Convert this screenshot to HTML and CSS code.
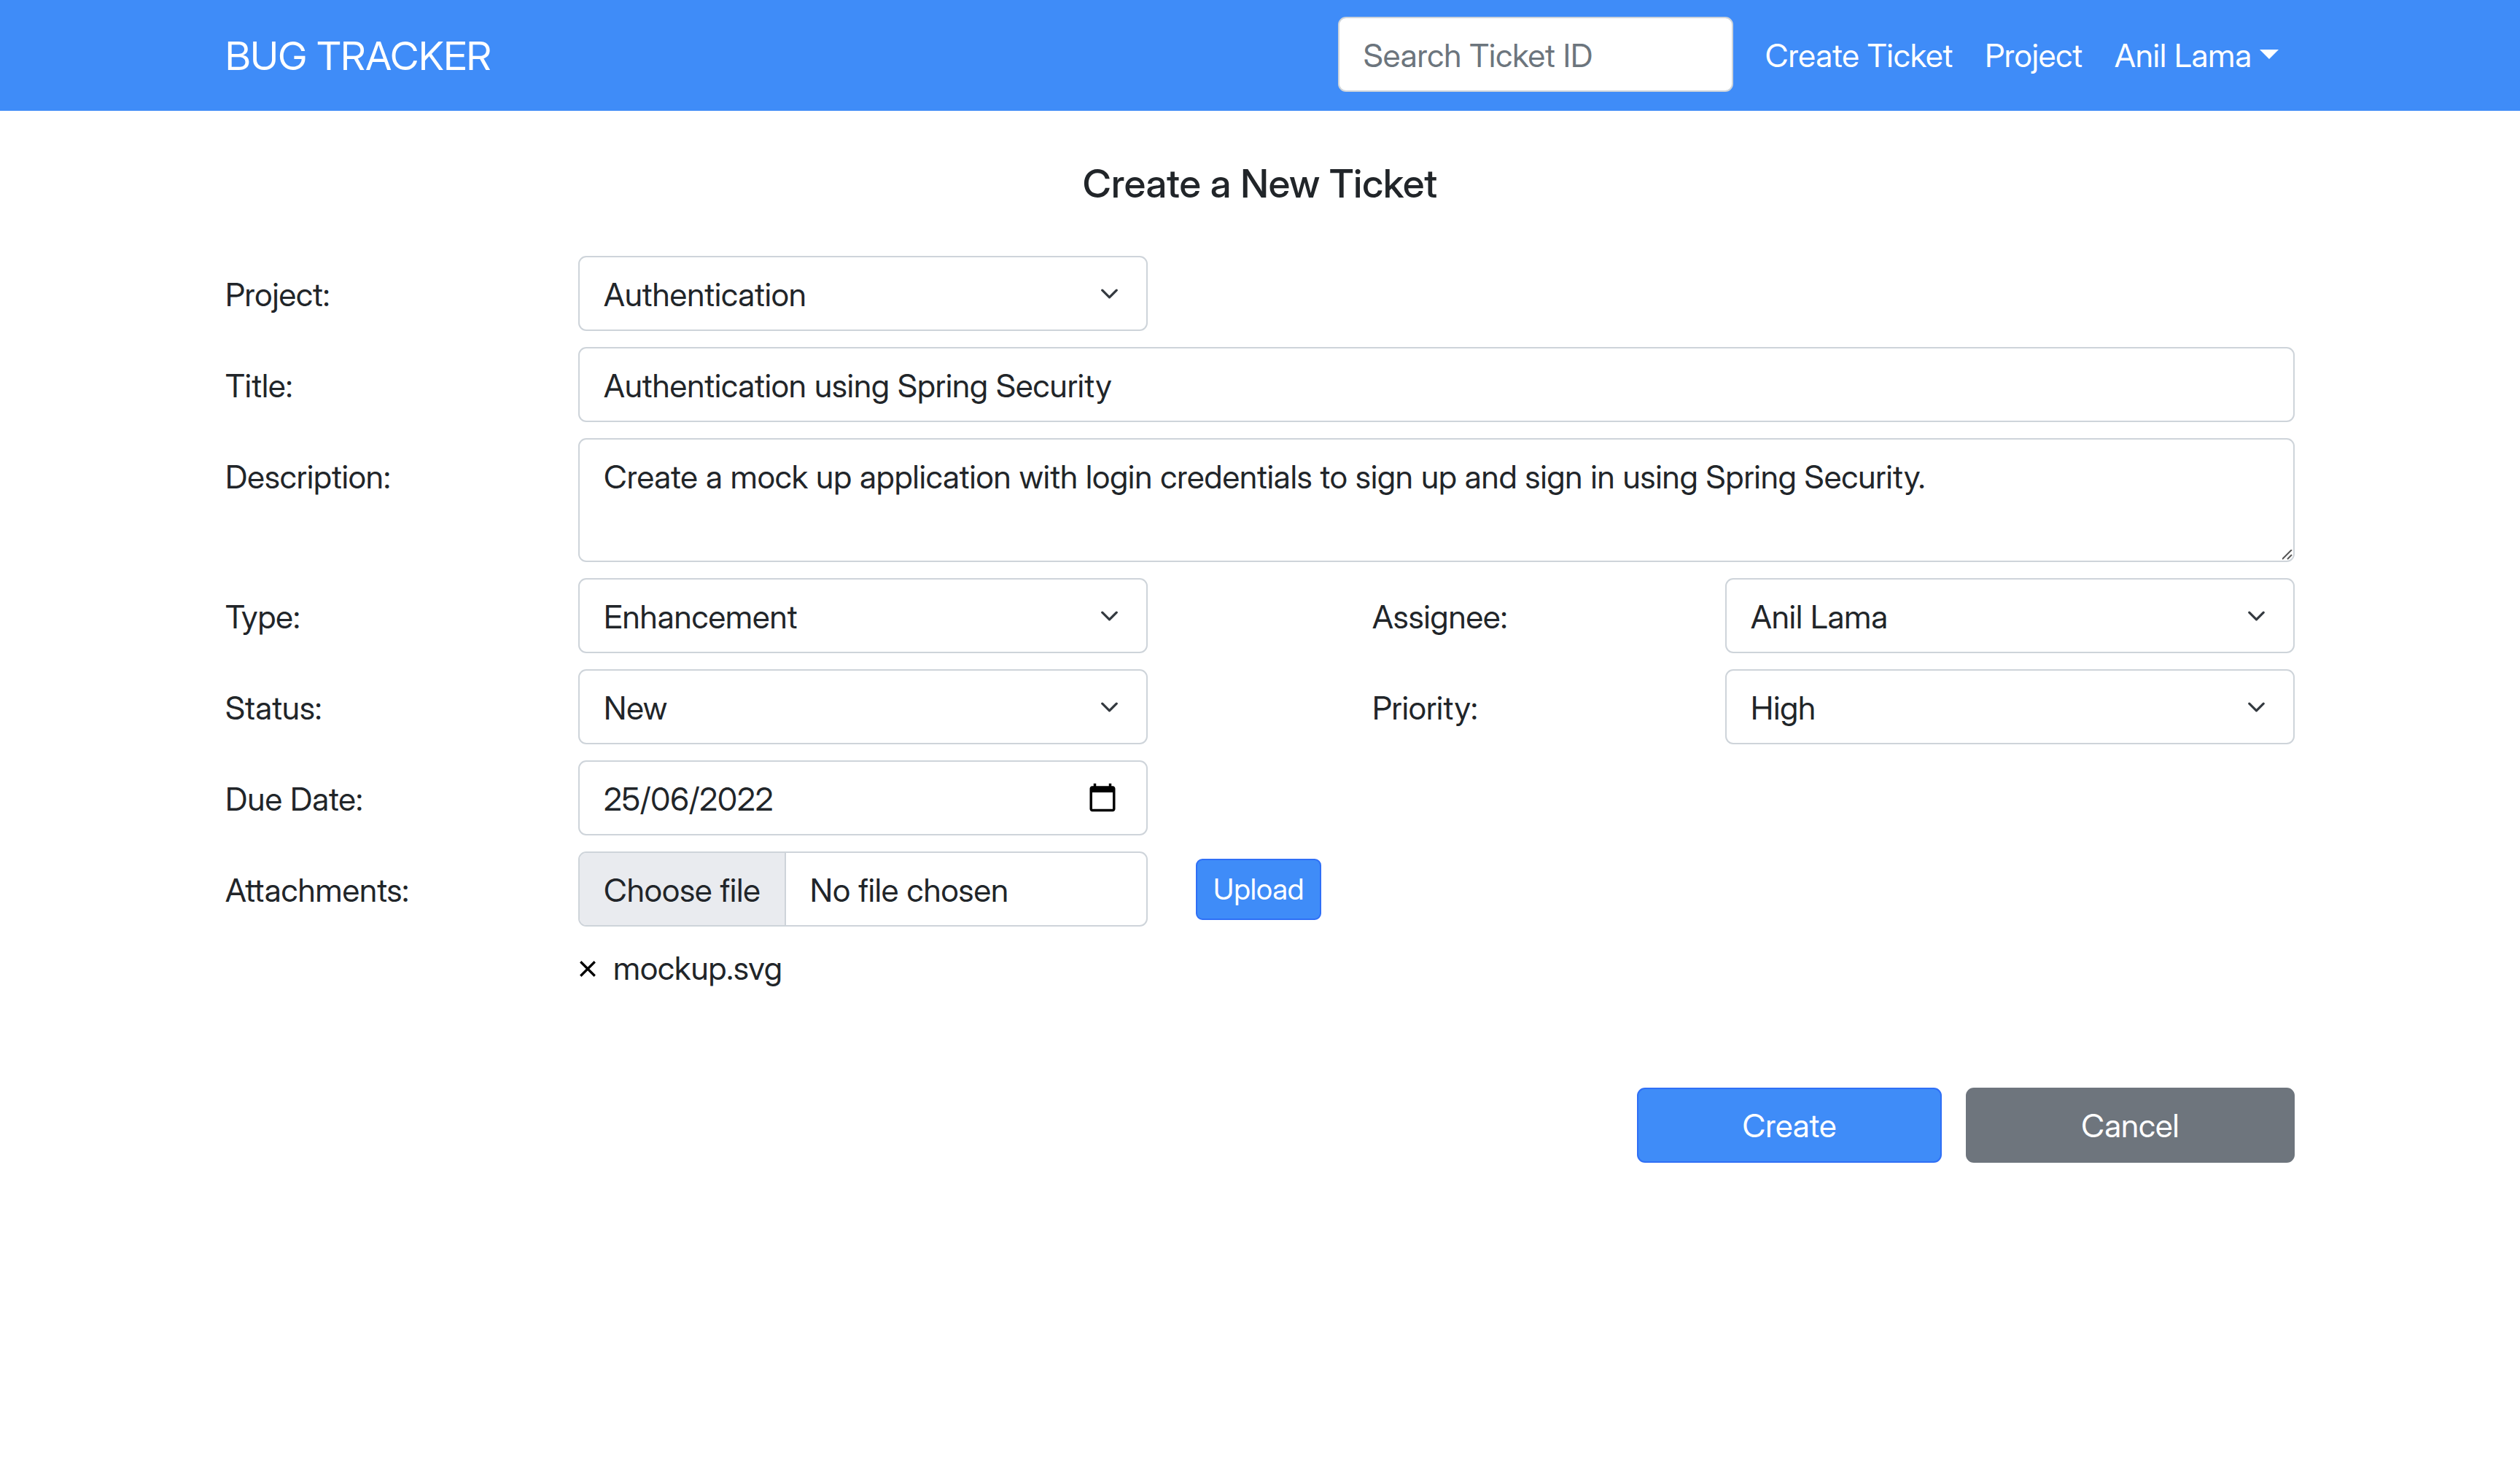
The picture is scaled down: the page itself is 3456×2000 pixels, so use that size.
FILE: index.html
```html
<!DOCTYPE html>
<html lang="en-GB">
<head>
<meta charset="utf-8">
<meta name="viewport" content="width=device-width, initial-scale=1">
<title>Bug Tracker - Create a New Ticket</title>
<link rel="stylesheet" href="styles.css">
</head>
<body>
<header class="navbar">
  <div class="container navbar-inner">
    <a class="brand" href="#">BUG TRACKER</a>
    <nav class="nav" aria-label="Main">
      <input class="control search" type="search" placeholder="Search Ticket ID" aria-label="Search Ticket ID">
      <a class="nav-link" href="#">Create Ticket</a>
      <a class="nav-link" href="#">Project</a>
      <a class="nav-link dropdown" href="#">Anil Lama</a>
    </nav>
  </div>
</header>
<main class="container">
  <h1 class="title">Create a New Ticket</h1>
  <form class="ticket-form">
    <label class="label" for="project">Project:</label>
    <select class="control select" id="project"><option>Authentication</option></select>

    <label class="label" for="title">Title:</label>
    <input class="control wide" id="title" type="text" value="Authentication using Spring Security">

    <label class="label" for="description">Description:</label>
    <textarea class="control wide" id="description" rows="2">Create a mock up application with login credentials to sign up and sign in using Spring Security.</textarea>

    <label class="label" for="type">Type:</label>
    <select class="control select" id="type"><option>Enhancement</option></select>
    <label class="label second" for="assignee">Assignee:</label>
    <select class="control select" id="assignee"><option>Anil Lama</option></select>

    <label class="label" for="status">Status:</label>
    <select class="control select" id="status"><option>New</option></select>
    <label class="label second" for="priority">Priority:</label>
    <select class="control select" id="priority"><option>High</option></select>

    <label class="label" for="due">Due Date:</label>
    <div class="control group date">
      <input class="date-input" id="due" type="text" value="25/06/2022">
      <button class="icon-button" type="button" aria-label="Pick a date">
        <svg class="calendar" viewBox="0 0 24 24" aria-hidden="true"><path d="M20 3h-1V1h-2v2H7V1H5v2H4c-1.100 0-2 .9-2 2v16c0 1.100.9 2 2 2h16c1.100 0 2-.9 2-2V5c0-1.100-.9-2-2-2zm0 18H4V8h16v13z"/></svg>
      </button>
    </div>

    <label class="label" for="file">Attachments:</label>
    <div class="control group file">
      <span class="file-button">Choose file</span>
      <span class="file-name">No file chosen</span>
      <input class="file-input" id="file" type="file">
    </div>
    <button class="button primary small" type="button">Upload</button>

    <ul class="attachments">
      <li class="attachment">
        <button class="icon-button" type="button" aria-label="Remove mockup.svg">
          <svg class="remove" viewBox="0 0 24 24" aria-hidden="true"><path d="M3 3l18 18M21 3L3 21" stroke="#000" stroke-width="3"/></svg>
        </button>
        <span>mockup.svg</span>
      </li>
    </ul>

    <div class="actions">
      <button class="button primary create" type="submit">Create</button>
      <button class="button secondary cancel" type="button">Cancel</button>
    </div>
  </form>
</main>
</body>
</html>
```
FILE: styles.css
```css
* { box-sizing: border-box; }

body {
  margin: 0;
  background: #fff;
  color: #212529;
  font-family: "Inter Display", Inter, "Liberation Sans", sans-serif;
  font-size: 44px;
  line-height: 67px;
}

input, select, textarea, button { font: inherit; color: inherit; margin: 0; }

.container {
  width: 100%;
  max-width: 2904px;
  margin: 0 auto;
  padding: 0 33px;
}

/* Top bar */
.navbar { background: #3f8cf8; color: #fff; padding: 23px 0 26px; }
.navbar-inner { display: flex; align-items: center; justify-content: space-between; }
.brand { color: inherit; text-decoration: none; font-size: 54px; padding-top: 3px; }
.nav { display: flex; align-items: center; }
.nav-link { color: inherit; text-decoration: none; padding: 3px 22px 0; }
.search { width: 542px; margin-right: 22px; appearance: none; }
.search::placeholder { color: #6c757d; opacity: 1; }
.dropdown::after {
  content: "";
  display: inline-block;
  margin-left: 11px;
  vertical-align: 11px;
  border-top: 13px solid;
  border-left: 13px solid transparent;
  border-right: 13px solid transparent;
}

.title { margin: 0; padding: 66px 0; font-size: 54px; font-weight: 500; text-align: center; }

/* Form */
.ticket-form {
  display: grid;
  grid-template-columns: repeat(24, minmax(0, 1fr));
  column-gap: 66px;
  row-gap: 22px;
  align-items: start;
}
.label { grid-column: 1 / span 4; padding: 20px 0 16px; }
.label.second { grid-column: 14 / span 4; }
.control {
  grid-column: span 7;
  min-width: 0;
  padding: 18px 33px 14px;
  border: 2px solid #ced4da;
  border-radius: 11px;
  background: #fff;
  outline: none;
}
.wide { grid-column: 5 / -1; }
textarea.control { display: block; resize: vertical; }
textarea::-webkit-scrollbar { width: 17px; height: 17px; }
textarea::-webkit-resizer {
  background: url("data:image/svg+xml,%3Csvg xmlns='http://www.w3.org/2000/svg' viewBox='0 0 17 17'%3E%3Cpath fill='none' stroke='%23555' stroke-width='2' d='M1 14L14 1M8 14l6-6'/%3E%3C/svg%3E") no-repeat center / 17px 17px;
}
.select {
  appearance: none;
  background: #fff url("data:image/svg+xml,%3Csvg xmlns='http://www.w3.org/2000/svg' viewBox='0 0 16 16'%3E%3Cpath fill='none' stroke='%23343a40' stroke-linecap='round' stroke-linejoin='round' stroke-width='2' d='M2 5l6 6 6-6'/%3E%3C/svg%3E") no-repeat right 33px center / 35px 26px;
}
.group { display: flex; align-items: center; }
.date { padding-right: 39px; }
.date-input { flex: 1; min-width: 0; padding: 0; border: 0; outline: none; background: none; }
.icon-button { display: flex; padding: 0; border: 0; background: none; }
.date .icon-button { padding-bottom: 6px; }
.calendar { width: 42px; height: 42px; }

.file { position: relative; padding: 0; }
.file-button {
  padding: 18px 33px 14px;
  border-right: 2px solid #ced4da;
  border-radius: 9px 0 0 9px;
  background: #e9ebef;
}
.file-name { padding: 18px 33px 14px; }
.file-input { position: absolute; inset: 0; width: 100%; opacity: 0; }

.attachments { grid-column: 5 / span 7; margin: 0; padding: 2px 0; list-style: none; }
.attachment { display: flex; align-items: center; gap: 22px; }
.remove { width: 26px; height: 26px; }

.button {
  padding: 17px 22px 15px;
  border: 2px solid;
  border-radius: 11px;
  color: #fff;
}
.primary { background: #3f8cf8; border-color: #2f6ff6; }
.secondary { background: #6e757d; border-color: #6e757d; }
.small {
  grid-column: 12 / span 3;
  align-self: center;
  justify-self: start;
  padding: 11px 22px;
  border-radius: 9px;
  font-size: 40px;
  line-height: 58px;
}
.actions { grid-column: 1 / -1; display: flex; justify-content: flex-end; gap: 33px; margin-top: 106px; }
.create { width: 418px; }
.cancel { width: 451px; }
```
